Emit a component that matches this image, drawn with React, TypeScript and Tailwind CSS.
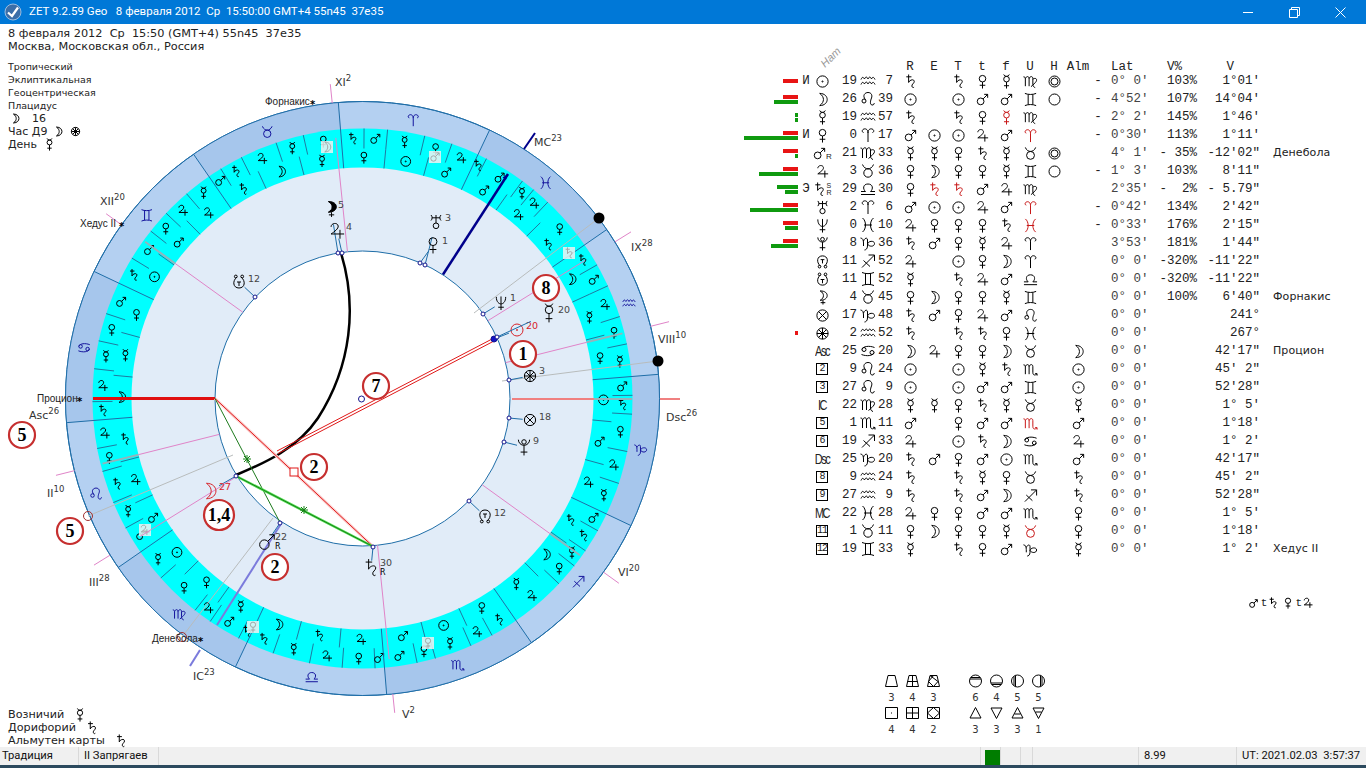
import type { ReactNode } from "react";

const circ = (x: number, y: number, r: number) =>
  `M${x - r} ${y}a${r} ${r} 0 1 0 ${r * 2} 0a${r} ${r} 0 1 0 ${-r * 2} 0`;

// glyphs are drawn in a -8..8 box
const GLYPHS: Record<string, string> = {
  Su: circ(0, 0, 6) + circ(0, 0, 0.6),
  Mo: "M-3 -6.5C2.5 -6.5 5 -3 5 0C5 3 2.5 6.5 -3 6.5C0 4.5 1 2 1 0C1 -2 0 -4.5 -3 -6.5Z",
  Me: "M-3 -7.5A3.2 3.2 0 0 0 3 -7.5" + circ(0, -2.5, 3) + "M0 0.5V7.5M-2.7 4.5H2.7",
  Ve: circ(0, -3, 3.5) + "M0 0.5V7.5M-3 4H3",
  Ma: circ(-2, 2, 3.6) + "M0.6 -0.6L5.5 -5.5M1.8 -5.5H5.5V-1.8",
  Ju: "M-5 -3.5C-5 -6.8 0.5 -7.5 1 -4.2C1.3 -2 -2 0.5 -5 2.5H6M2.5 -1V6.5",
  Sa: "M-4.5 -5H1M-2 -7.5V1C-1 -2 4 -3 4 0C4 2 1 3 1.5 5C1.8 6.5 3 6.8 3.8 6",
  Ur: "M-5 -7C-3.5 -5.5 -3.5 -3 -5 -1.5M5 -7C3.5 -5.5 3.5 -3 5 -1.5M-4 -4.2H4M0 -7V1" + circ(0, 3.8, 2.8),
  Ne: "M-5 -6.5C-5 -1 -2 1 0 1C2 1 5 -1 5 -6.5M0 -7V7.5M-3 4.5H3",
  Pl: circ(0, -4.5, 2) + "M-5 -6.5A5 5 0 0 0 5 -6.5M0 -1.5V7.5M-3 4.5H3",
  NN: "M-2 5C-7 1 -6 -6 0 -6C6 -6 7 1 2 5M-2 -2H2M0 -2V2" + circ(-3.2, 5.5, 1.4) + circ(3.2, 5.5, 1.4),
  SN: "M-2 -5C-7 -1 -6 6 0 6C6 6 7 -1 2 -5M-2 0H2M0 0V4" + circ(-3.2, -5.5, 1.4) + circ(3.2, -5.5, 1.4),
  Li: "M-2.5 -7C3 -7 5 -4.5 5 -2C5 0.5 2.5 3 -2.5 3C0 1.5 1 0 1 -2C1 -4 0 -5.5 -2.5 -7ZM0.5 3V7.5M-2 5.5H3",
  Fo: circ(0, 0, 6) + "M-4.2 -4.2L4.2 4.2M4.2 -4.2L-4.2 4.2",
  Sp: circ(0, 0, 6) + "M-4.2 -4.2L4.2 4.2M4.2 -4.2L-4.2 4.2M-6 0H6M0 -6V6",
  Ar: "M0 7V-2C0 -6 -3 -7 -5 -5.5C-6.5 -4.3 -5.5 -2.5 -4.5 -2.5M0 -2C0 -6 3 -7 5 -5.5C6.5 -4.3 5.5 -2.5 4.5 -2.5",
  Ta: circ(0, 2, 4.2) + "M-5.5 -6.5C-4.5 -3.5 -2 -2.2 0 -2.2C2 -2.2 4.5 -3.5 5.5 -6.5",
  Ge: "M-6 -6.5C-2.5 -5 2.5 -5 6 -6.5M-6 6.5C-2.5 5 2.5 5 6 6.5M-2.5 -5.5V5.5M2.5 -5.5V5.5",
  Cn: circ(-4, -1.5, 2) + circ(4, 1.5, 2) + "M-6 -1.5C-5 -5 1.5 -5.5 6.5 -3.5M6 1.5C5 5 -1.5 5.5 -6.5 3.5",
  Le: circ(-4, 2, 2) + "M-2.6 0.6C-6 -3.5 -3 -6.5 0 -6.5C3.5 -6.5 4.5 -3.5 3.5 -1C2.5 1.5 1.5 5.5 4 6C5.5 6.3 6.3 5 6.2 4",
  Vi: "M-7.5 -5C-6 -5 -5.5 -4 -5.5 -3V5M-5.5 -3C-4.5 -6 -1.5 -6 -1.5 -3V5M-1.5 -3C-0.5 -6 2.5 -6 2.5 -3V3C2.5 5 3.5 6 5 6.5M2.5 -2.5C5.5 -4.5 7.5 -2.5 6 0C5 1.5 3 3.5 0.5 5.5",
  Li2: "M-7 5.5H7M-7 2.5H-2.5C-5.5 0 -5 -5 0 -5C5 -5 5.5 0 2.5 2.5H7",
  Sc: "M-7.5 -5C-6 -5 -5.5 -4 -5.5 -3V5M-5.5 -3C-4.5 -6 -1.5 -6 -1.5 -3V5M-1.5 -3C-0.5 -6 2.5 -6 2.5 -3V3C2.5 6.5 5 6.5 7 4.5M5 4.2L7 4.5V6.5",
  Sg: "M-6 6.5L6.5 -6M0.5 -6H6.5V0M-4.5 -0.5L2 5.5",
  Cp: "M-7.5 -5C-5.5 -5 -4.5 -3 -4.5 0V3M-4.5 -2C-3.5 -5 -0.5 -6 -0.5 -3V3C-0.5 6 -2.5 7 -3.5 7M-0.5 1C0.5 -2.5 6.5 -2.5 6.5 0.5C6.5 4 1 4 -0.5 1",
  Aq: "M-7 -1.5C-6 -4 -5 -4.5 -3.5 -2C-2.5 -4.5 -1 -4.5 0 -2C1 -4.5 2.5 -4.5 3.5 -2C4.5 -4.5 6 -4 7 -1.5M-7 3.5C-6 1 -5 0.5 -3.5 3C-2.5 0.5 -1 0.5 0 3C1 0.5 2.5 0.5 3.5 3C4.5 0.5 6 1 7 3.5",
  Pi: "M-5.5 -7C-1.5 -4 -1.5 4 -5.5 7M5.5 -7C1.5 -4 1.5 4 5.5 7M-4 0H4",
};

const SIGNS = ["Ar", "Ta", "Ge", "Cn", "Le", "Vi", "Li2", "Sc", "Sg", "Cp", "Aq", "Pi"];

const TERMS: [string, number][][] = [
  [["Ju", 6], ["Ve", 12], ["Me", 20], ["Ma", 25], ["Sa", 30]],
  [["Ve", 8], ["Me", 14], ["Ju", 22], ["Sa", 27], ["Ma", 30]],
  [["Me", 6], ["Ju", 12], ["Ve", 17], ["Ma", 24], ["Sa", 30]],
  [["Ma", 7], ["Ve", 13], ["Me", 19], ["Ju", 26], ["Sa", 30]],
  [["Ju", 6], ["Ve", 11], ["Sa", 18], ["Me", 24], ["Ma", 30]],
  [["Me", 7], ["Ve", 17], ["Ju", 21], ["Ma", 28], ["Sa", 30]],
  [["Sa", 6], ["Me", 14], ["Ju", 21], ["Ve", 28], ["Ma", 30]],
  [["Ma", 7], ["Ve", 11], ["Me", 19], ["Ju", 24], ["Sa", 30]],
  [["Ju", 12], ["Ve", 17], ["Me", 21], ["Sa", 26], ["Ma", 30]],
  [["Me", 7], ["Ju", 14], ["Ve", 22], ["Sa", 26], ["Ma", 30]],
  [["Me", 7], ["Ve", 13], ["Ju", 20], ["Ma", 25], ["Sa", 30]],
  [["Ve", 12], ["Ju", 16], ["Me", 19], ["Ma", 28], ["Sa", 30]],
];

const FACES = [
  ["Ma", "Su", "Ve"], ["Me", "Mo", "Sa"], ["Ju", "Ma", "Su"], ["Ve", "Me", "Mo"],
  ["Sa", "Ju", "Ma"], ["Su", "Ve", "Me"], ["Mo", "Sa", "Ju"], ["Ma", "Su", "Ve"],
  ["Me", "Mo", "Sa"], ["Ju", "Ma", "Su"], ["Ve", "Me", "Mo"], ["Sa", "Ju", "Ma"],
];

const CX = 362.5;
const CY = 398.5;
const pt = (lon: number, r: number): [number, number] => {
  const t = ((180 + lon - 115.33) * Math.PI) / 180;
  return [CX + r * Math.cos(t), CY - r * Math.sin(t)];
};

const Sym = ({ n, x, y, size = 12, color = "#000", fill = "none" }: { n: string; x: number; y: number; size?: number; color?: string; fill?: string }) => (
  <path
    d={GLYPHS[n]}
    transform={`translate(${x} ${y}) scale(${size / 16})`}
    fill={fill}
    stroke={color}
    strokeWidth={1}
    vectorEffect="non-scaling-stroke"
  />
);

const Ico = ({ n, size = 15, color = "#000" }: { n: string; size?: number; color?: string }) => (
  <svg width={size} height={size} viewBox="-8 -8 16 16" className="inline-block align-middle overflow-visible">
    <path d={GLYPHS[n]} fill="none" stroke={color} strokeWidth={1} vectorEffect="non-scaling-stroke" />
  </svg>
);

const Line = ({ a, b, color, w = 1 }: { a: [number, number]; b: [number, number]; color: string; w?: number }) => (
  <line x1={a[0]} y1={a[1]} x2={b[0]} y2={b[1]} stroke={color} strokeWidth={w} />
);

const HOUSES: { lon: number; gray: boolean }[] = [
  { lon: 129.4, gray: true },
  { lon: 147.15, gray: false },
  { lon: 211.18, gray: false },
  { lon: 259.55, gray: true },
  { lon: 309.4, gray: true },
  { lon: 327.15, gray: false },
  { lon: 31.18, gray: false },
  { lon: 79.55, gray: true },
];

const LABELS: [string, string, number, number][] = [
  ["XI", "2", 335, 86], ["XII", "20", 100, 205], ["MC", "23", 534, 146], ["IX", "28", 631, 251],
  ["VIII", "10", 658, 343], ["Dsc", "26", 666, 421], ["VI", "20", 618, 576], ["V", "2", 402, 718],
  ["IC", "23", 193, 680], ["III", "28", 89, 586], ["II", "10", 47, 497], ["Asc", "26", 29, 419],
];

const STARS: [string, number, number, number][] = [
  ["Форнакис", 265, 105, 310], ["Хедус II", 80, 227, 119], ["Процион", 37, 402, 77], ["Денебола", 152, 642, 198],
];

const PLANETS: { n: string; x: number; y: number; deg: string; dx: number; dy: number; color?: string; from: [number, number]; size?: number; r?: boolean }[] = [
  { n: "Su", x: 517, y: 330, deg: "20", dx: 9, dy: -1, color: "#d8232a", from: [494, 339], size: 16 },
  { n: "Me", x: 549, y: 313, deg: "20", dx: 9, dy: 0, from: [497, 337], size: 20 },
  { n: "Ne", x: 501, y: 303, deg: "1", dx: 9, dy: -2, from: [483, 314], size: 15 },
  { n: "Ur", x: 436, y: 222, deg: "3", dx: 9, dy: -1, from: [425, 265], size: 16 },
  { n: "Ve", x: 433, y: 245, deg: "1", dx: 9, dy: -1, from: [420, 263], size: 18 },
  { n: "Li", x: 331, y: 209, deg: "5", dx: 7, dy: -1, from: [338, 253], size: 17 },
  { n: "Ju", x: 337, y: 231, deg: "4", dx: 9, dy: -1, from: [342, 253], size: 19 },
  { n: "SN", x: 239, y: 282, deg: "12", dx: 9, dy: 0, from: [255, 297], size: 16 },
  { n: "Mo", x: 210, y: 491, deg: "27", dx: 9, dy: -1, color: "#d8232a", from: [236, 476], size: 19 },
  { n: "Ma", x: 267, y: 542, deg: "22", dx: 8, dy: -2, from: [280, 523], size: 21, r: true },
  { n: "Sa", x: 371, y: 568, deg: "30", dx: 9, dy: -2, from: [373, 547], size: 19, r: true },
  { n: "NN", x: 485, y: 516, deg: "12", dx: 9, dy: 0, from: [469, 501], size: 16 },
  { n: "Pl", x: 524, y: 447, deg: "9", dx: 9, dy: -3, from: [504, 442], size: 18 },
  { n: "Fo", x: 530, y: 420, deg: "18", dx: 9, dy: 0, from: [509, 418], size: 15 },
  { n: "Sp", x: 530, y: 376, deg: "3", dx: 9, dy: -2, from: [509, 380], size: 15 },
];

const BADGES: [string, number, number, number][] = [
  ["1", 523, 354, 13], ["8", 546, 288, 13], ["7", 376, 386, 13], ["2", 314, 467, 13],
  ["2", 275, 567, 13], ["1,4", 219, 515, 15], ["5", 70, 531, 13], ["5", 22, 435, 13],
];

const HILITES: [string, number, number][] = [
  ["Mo", 327, 147], ["Ju", 145, 530], ["Ve", 253, 627], ["Ve", 428, 643], ["Ma", 435, 157], ["Sa", 569, 253],
];

const Chart = () => {
  const font = "DejaVu Sans, sans-serif";
  return (
    <svg viewBox="0 24 740 723" width={740} height={723} className="absolute left-0 top-0">
      <circle cx={CX} cy={CY} r={297} fill="#b4d0f1" stroke="#1f6ea8" />
      {SIGNS.map((s, i) => {
        const a = pt(i * 30, 297);
        const b = pt(i * 30 + 30, 297);
        return i % 2 === 1 ? (
          <path key={s} d={`M${CX} ${CY}L${a[0]} ${a[1]}A297 297 0 0 0 ${b[0]} ${b[1]}Z`} fill="#a6c6ec" />
        ) : null;
      })}
      <circle cx={CX} cy={CY} r={297} fill="none" stroke="#1f6ea8" />
      <circle cx={CX} cy={CY} r={270} fill="#00ffff" />
      <circle cx={CX} cy={CY} r={231} fill="#e1ecf8" />
      <circle cx={CX} cy={CY} r={147.5} fill="#fff" stroke="#1f6ea8" />

      {SIGNS.map((s, i) => {
        let start = 0;
        const base = i * 30;
        const [sx, sy] = pt(base + 15, 283);
        return (
          <g key={s}>
            <Line a={pt(base, 231)} b={pt(base, 297)} color="#1f6ea8" />
            <Sym n={s} x={sx} y={sy} size={14} color="#14149c" />
            {TERMS[i].map(([p, end]) => {
              const mid = base + (start + end) / 2;
              const [x, y] = pt(mid, 260);
              start = end;
              return (
                <g key={end}>
                  {end < 30 && <Line a={pt(base + end, 250)} b={pt(base + end, 270)} color="#1f7aa0" />}
                  <Sym n={p} x={x} y={y} size={13} />
                </g>
              );
            })}
            {FACES[i].map((p, k) => {
              const [x, y] = pt(base + 5 + k * 10, 241);
              return (
                <g key={k}>
                  {k > 0 && <Line a={pt(base + k * 10, 231)} b={pt(base + k * 10, 250)} color="#1f7aa0" />}
                  <Sym n={p} x={x} y={y} size={13} />
                </g>
              );
            })}
          </g>
        );
      })}

      {HILITES.map(([n, x, y], i) => (
        <g key={i}>
          <rect x={x - 6} y={y - 6} width={12} height={12} fill="#eef2f2" fillOpacity={0.85} />
          <Sym n={n} x={x} y={y} size={12} color="#a4a8a8" />
        </g>
      ))}

      {/* house cusps */}
      {HOUSES.map((h) => (
        <g key={h.lon}>
          <Line a={pt(h.lon, 147.5)} b={pt(h.lon, h.gray ? 231 : 262)} color="#e084c8" />
          {h.gray && <Line a={pt(h.lon, 231)} b={pt(h.lon, 268)} color="#93b4bc" w={2} />}
          <Line a={pt(h.lon, 297)} b={pt(h.lon, 316)} color="#e084c8" />
        </g>
      ))}
      <Line a={[93, 398.5]} b={[215, 398.5]} color="#e01010" w={3} />
      <Line a={[512, 399]} b={[594, 399]} color="#f08080" w={2} />
      <Line a={[594, 399]} b={[632, 399]} color="#93b4bc" w={2} />
      <Line a={[660, 399]} b={[680, 399]} color="#f08080" w={2} />
      <Line a={[443, 274.5]} b={[508, 174]} color="#00008b" w={2.5} />
      <path d="M508 174l-5.5 3.5l3.5 2.2z" fill="#00008b" />
      <Line a={[524, 149]} b={[535, 133]} color="#00008b" w={2} />
      <Line a={[281.5, 523]} b={[217, 625]} color="#7b7bdc" w={2} />
      <Line a={[200, 650]} b={[190, 666]} color="#7b7bdc" w={2} />

      {/* fixed star lines */}
      <Line a={[599, 218]} b={[474, 313]} color="#b8bcbc" />
      <Line a={[658, 361]} b={[502, 381]} color="#b8bcbc" />
      <Line a={[88, 516]} b={[233, 455]} color="#b8bcbc" />
      <Line a={[182, 637]} b={[273, 518]} color="#b8bcbc" />
      <circle cx={599} cy={218} r={5.5} fill="#000" />
      <circle cx={658} cy={361} r={5.5} fill="#000" />
      <circle cx={88} cy={516} r={4.5} fill="none" stroke="#a03030" />
      <circle cx={182} cy={637} r={4.5} fill="none" stroke="#a03030" />

      {/* aspects */}
      <path d="M341 253C357 305 352 365 318 418C298 448 265 463 236 475" fill="none" stroke="#000" strokeWidth={2.5} />
      <Line a={[215, 398.5]} b={[373, 546.5]} color="#fbd0d0" w={3} />
      <Line a={[215, 398.5]} b={[373, 546.5]} color="#e01818" />
      <Line a={[215, 398.5]} b={[280, 522.5]} color="#1c7a1c" />
      <Line a={[236, 476]} b={[373, 546.5]} color="#52e052" w={2.5} />
      <Line a={[236, 476]} b={[373, 546.5]} color="#168016" />
      <path d="M243 459h8M247 455v8M244 456l6 6M250 456l-6 6" stroke="#168016" />
      <path d="M300 510h8M304 506v8M301 507l6 6M307 507l-6 6" stroke="#168016" />
      <rect x={290} y={468} width={8} height={8} fill="#fff" stroke="#e01818" />
      <Line a={[494, 338]} b={[277, 451]} color="#e01818" />
      <Line a={[495, 340.5]} b={[278, 453.5]} color="#e01818" />
      <circle cx={361.5} cy={399} r={3} fill="#fff" stroke="#14148c" />

      {/* planets */}
      {PLANETS.map((p) => (
        <g key={p.n}>
          <Line a={p.from} b={[p.x + (p.from[0] - p.x) * 0.35, p.y + (p.from[1] - p.y) * 0.35]} color="#1f6ea8" />
          <circle cx={p.from[0]} cy={p.from[1]} r={p.n === "Su" ? 3 : 2} fill={p.n === "Su" ? "#1414c8" : "#fff"} stroke="#14148c" />
          <Sym n={p.n} x={p.x} y={p.y} size={p.size} color={p.color} fill={p.n === "Li" ? "#000" : "none"} />
          <text x={p.x + p.dx} y={p.y + p.dy} fontSize={9.5} fontFamily={font} fill={p.color ?? "#444"}>{p.deg}</text>
          {p.r && <text x={p.x + p.dx} y={p.y + p.dy + 9} fontSize={8} fontFamily={font} fill="#000">R</text>}
        </g>
      ))}

      {LABELS.map(([t, s, x, y]) => (
        <text key={t} x={x} y={y} fontSize={11} fontFamily={font} fill="#333">
          {t}
          <tspan dy={-5} fontSize={8.5}>{s}</tspan>
        </text>
      ))}
      {STARS.map(([t, x, y, sx]) => (
        <g key={t}>
          <text x={x} y={y} fontSize={10} fontFamily="Liberation Sans, sans-serif" fill="#222">{t}</text>
          <text x={sx} y={y + 3} fontSize={10} fontWeight={700} fontFamily={font} fill="#000">*</text>
        </g>
      ))}
      {BADGES.map(([t, x, y, r], i) => (
        <g key={i}>
          <circle cx={x} cy={y} r={r} fill="#fff" stroke="#c62f2f" strokeWidth={2.2} />
          <text x={x} y={y + 6} textAnchor="middle" fontSize={18} fontWeight={700} fontFamily="Liberation Serif, serif" fill="#000">{t}</text>
        </g>
      ))}
    </svg>
  );
};

type Row = {
  flag?: string;
  sym: ReactNode;
  deg: string;
  sign: string;
  min: string;
  r: string[];
  h?: string;
  alm?: string;
  minus?: boolean;
  lat: string;
  vp?: string;
  v: string;
  note?: string;
  top?: [string, number];
  bottom?: [string, number];
};

const RED = "#e81414";
const GREEN = "#0f9a0f";
const Box = ({ t }: { t: string }) => (
  <span className="inline-flex items-center justify-center w-[12px] h-[12px] border border-black text-[10px] leading-none tracking-[-1px]">{t}</span>
);
const Tag = ({ t }: { t: string }) => <span className="text-[11px] tracking-[-1.5px] leading-none scale-y-125 font-['Liberation_Sans']">{t}</span>;

const ROWS: Row[] = [
  { flag: "И", sym: <Ico n="Su" />, deg: "19", sign: "Aq", min: "7", r: ["Sa", "", "Sa", "Ve", "Me", "Vi"], h: "dbl", minus: true, lat: "0° 0'", vp: "103%", v: "1°01'", top: [RED, 15] },
  { sym: <Ico n="Mo" />, deg: "26", sign: "Le", min: "39", r: ["Su", "", "Su", "Ma", "Ma", "Ge"], h: "one", minus: true, lat: "4°52'", vp: "107%", v: "14°04'", top: [RED, 15], bottom: [GREEN, 24] },
  { sym: <Ico n="Me" />, deg: "19", sign: "Aq", min: "57", r: ["Sa", "", "Sa", "Ve", "!Me", "Vi"], minus: true, lat: "2° 2'", vp: "145%", v: "1°46'", top: [GREEN, 3], bottom: [GREEN, 3] },
  { flag: "И", sym: <Ico n="Ve" />, deg: "0", sign: "Ar", min: "17", r: ["Ma", "Su", "Su", "Ju", "Ma", "!Ar"], minus: true, lat: "0°30'", vp: "113%", v: "1°11'", top: [RED, 15], bottom: [GREEN, 54] },
  { sym: <span className="inline-flex items-end"><Ico n="Ma" /><span className="text-[8px] leading-none -ml-px font-['Liberation_Sans']">R</span></span>, deg: "21", sign: "Vi", min: "33", r: ["Me", "Me", "Ve", "Sa", "Me", "Ta"], h: "dbl", lat: "4° 1'", vp: "- 35%", v: "-12'02\"", note: "Денебола", top: [RED, 15], bottom: [GREEN, 3] },
  { sym: <Ico n="Ju" />, deg: "3", sign: "Ta", min: "36", r: ["Ve", "Mo", "Ve", "Ve", "Me", "Ge"], h: "one", minus: true, lat: "1° 3'", vp: "103%", v: "8'11\"", top: [RED, 15], bottom: [GREEN, 39] },
  { flag: "Э", sym: <span className="inline-flex items-center"><Ico n="Sa" /><span className="flex flex-col text-[7px] leading-[7px] -ml-px font-['Liberation_Sans']"><span>S</span><span>R</span></span></span>, deg: "29", sign: "Li2", min: "30", r: ["Ve", "!Sa", "!Sa", "Ma", "Ju", "Vi"], lat: "2°35'", vp: "-  2%", v: "- 5.79\"", top: [GREEN, 21], bottom: [GREEN, 13] },
  { sym: <Ico n="Ur" />, deg: "2", sign: "Ar", min: "6", r: ["Ma", "Su", "Su", "Ju", "Ma", "!Ar"], minus: true, lat: "0°42'", vp: "134%", v: "2'42\"", top: [RED, 15], bottom: [GREEN, 48] },
  { sym: <Ico n="Ne" />, deg: "0", sign: "Pi", min: "10", r: ["Ju", "Ve", "Ve", "Ve", "Sa", "!Pi"], minus: true, lat: "0°33'", vp: "176%", v: "2'15\"", top: [RED, 15], bottom: [GREEN, 13] },
  { sym: <Ico n="Pl" />, deg: "8", sign: "Cp", min: "36", r: ["Sa", "Ma", "Ve", "Me", "Ju", "Ar"], lat: "3°53'", vp: "181%", v: "1'44\"", top: [RED, 15], bottom: [GREEN, 27] },
  { sym: <Ico n="NN" />, deg: "11", sign: "Sg", min: "52", r: ["Ju", "", "Su", "Ve", "Mo", "Ar"], lat: "0° 0'", vp: "-320%", v: "-11'22\"" },
  { sym: <Ico n="SN" />, deg: "11", sign: "Ge", min: "52", r: ["Me", "", "Sa", "Ju", "Ma", "Li2"], lat: "0° 0'", vp: "-320%", v: "-11'22\"" },
  { sym: <Ico n="Li" />, deg: "4", sign: "Ta", min: "45", r: ["Ve", "Mo", "Ve", "Ve", "Me", "Ge"], lat: "0° 0'", vp: "100%", v: "6'40\"", note: "Форнакис" },
  { sym: <Ico n="Fo" />, deg: "17", sign: "Cp", min: "48", r: ["Sa", "Ma", "Ve", "Ju", "Ma", "Le"], lat: "0° 0'", v: "241°" },
  { sym: <Ico n="Sp" />, deg: "2", sign: "Aq", min: "52", r: ["Sa", "", "Sa", "Sa", "Ve", "Pi"], lat: "0° 0'", v: "267°", top: [RED, 3] },
  { sym: <Tag t="Asc" />, deg: "25", sign: "Cn", min: "20", r: ["Mo", "Ju", "Ve", "Ve", "Mo", "Ta"], alm: "Mo", lat: "0° 0'", v: "42'17\"", note: "Процион" },
  { sym: <Box t="2" />, deg: "9", sign: "Le", min: "24", r: ["Su", "", "Su", "Me", "Sa", "Sc"], alm: "Su", lat: "0° 0'", v: "45' 2\"" },
  { sym: <Box t="3" />, deg: "27", sign: "Le", min: "9", r: ["Su", "", "Su", "Ma", "Ma", "Ge"], alm: "Su", lat: "0° 0'", v: "52'28\"" },
  { sym: <Tag t="IC" />, deg: "22", sign: "Vi", min: "28", r: ["Me", "Me", "Ve", "Sa", "Me", "Ta"], alm: "Me", lat: "0° 0'", v: "1° 5'" },
  { sym: <Box t="5" />, deg: "1", sign: "Sc", min: "11", r: ["Ma", "", "Ve", "Ma", "Ma", "!Sc"], alm: "Ma", lat: "0° 0'", v: "1°18'" },
  { sym: <Box t="6" />, deg: "19", sign: "Sg", min: "33", r: ["Ju", "", "Su", "Sa", "Mo", "Cn"], alm: "Ju", lat: "0° 0'", v: "1° 2'" },
  { sym: <Tag t="Dsc" />, deg: "25", sign: "Cp", min: "20", r: ["Sa", "Ma", "Ve", "Ma", "Su", "Sc"], alm: "Ma", lat: "0° 0'", v: "42'17\"" },
  { sym: <Box t="8" />, deg: "9", sign: "Aq", min: "24", r: ["Sa", "", "Sa", "Me", "Ve", "Ta"], alm: "Sa", lat: "0° 0'", v: "45' 2\"" },
  { sym: <Box t="9" />, deg: "27", sign: "Aq", min: "9", r: ["Sa", "", "Sa", "Ma", "Mo", "Sg"], alm: "Sa", lat: "0° 0'", v: "52'28\"" },
  { sym: <Tag t="MC" />, deg: "22", sign: "Pi", min: "28", r: ["Ju", "Ve", "Ve", "Ma", "Ma", "Sc"], alm: "Ve", lat: "0° 0'", v: "1° 5'" },
  { sym: <Box t="11" />, deg: "1", sign: "Ta", min: "11", r: ["Ve", "Mo", "Ve", "Ve", "Me", "!Ta"], alm: "Ve", lat: "0° 0'", v: "1°18'" },
  { sym: <Box t="12" />, deg: "19", sign: "Ge", min: "33", r: ["Me", "", "Sa", "Ve", "Ma", "Cp"], alm: "Me", lat: "0° 0'", v: "1° 2'", note: "Хедус II" },
];

const GRID = "grid grid-cols-[58px_16px_16px_27px_21px_15px_5px_24px_24px_24px_24px_24px_24px_24px_24px_16px_47px_44px_63px_1fr] items-center";

const Cell = ({ v }: { v: string }) => {
  if (!v) return <span />;
  const red = v.startsWith("!");
  return (
    <span className="flex justify-center">
      <Ico n={red ? v.slice(1) : v} color={red ? "#c81818" : "#000"} />
    </span>
  );
};

const HouseMark = ({ kind }: { kind?: string }) => (
  <span className="flex justify-center">
    {kind && (
      <svg width={13} height={13} viewBox="0 0 13 13">
        <circle cx={6.5} cy={6.5} r={5.5} fill="none" stroke="#000" />
        {kind === "dbl" && <circle cx={6.5} cy={6.5} r={3.5} fill="none" stroke="#000" />}
      </svg>
    )}
  </span>
);

const Table = () => (
  <div className="relative w-[626px] pt-[34px] font-['Liberation_Mono',monospace] text-[12.5px] text-[#222]">
    <span className="absolute left-[79px] top-[25px] -rotate-45 text-[11px] italic text-[#999] font-['Liberation_Sans']">Нат</span>
    <div className={`${GRID} h-[14px]`}>
      <span className="col-start-8 col-span-1 text-center">R</span>
      <span className="text-center">E</span>
      <span className="text-center">T</span>
      <span className="text-center">t</span>
      <span className="text-center">f</span>
      <span className="text-center">U</span>
      <span className="text-center">H</span>
      <span className="text-center">Alm</span>
      <span />
      <span className="pl-[5px]">Lat</span>
      <span className="text-right pr-[15px]">V%</span>
      <span className="text-right pr-[26px]">V</span>
    </div>
    {ROWS.map((row, i) => (
      <div key={i} className={`${GRID} h-[18px] whitespace-pre`}>
        <span className="flex flex-col items-end gap-[1px]">
          {row.top && <span className="h-[4px] block" style={{ width: row.top[1], background: row.top[0] }} />}
          {row.bottom && <span className="h-[4px] block" style={{ width: row.bottom[1], background: row.bottom[0] }} />}
        </span>
        <span className="text-center">{row.flag}</span>
        <span className="flex justify-center items-center">{row.sym}</span>
        <span className="text-right">{row.deg}</span>
        <span className="flex justify-center"><Ico n={row.sign} size={16} /></span>
        <span className="text-right">{row.min}</span>
        <span />
        {row.r.map((v, k) => <Cell key={k} v={v} />)}
        <HouseMark kind={row.h} />
        <Cell v={row.alm ?? ""} />
        <span className="text-center">{row.minus ? "-" : ""}</span>
        <span className="pl-[5px] text-[#444]">{row.lat}</span>
        <span className="text-right">{row.vp}</span>
        <span className="text-right">{row.v}</span>
        <span className="pl-[13px] text-[11px] leading-[16px] tracking-[0.1px] font-['DejaVu_Sans',sans-serif]">{row.note}</span>
      </div>
    ))}
    <div className="flex items-center justify-end pr-[52px] mt-[38px] h-[14px] text-[11px]">
      <Ico n="Ma" size={11} />
      <span className="ml-[2px]">t</span>
      <Ico n="Sa" size={12} />
      <span className="w-[3px]" />
      <Ico n="Ve" size={12} />
      <span className="ml-[1px]">t</span>
      <Ico n="Ju" size={12} />
    </div>
    <Elements />
  </div>
);

const shape = (d: string, extra?: ReactNode) => (
  <svg width={15} height={14} viewBox="0 0 15 14">
    <path d={d} fill="none" stroke="#000" />
    {extra}
  </svg>
);

const QUADS: [ReactNode, string][][] = [
  [
    [shape("M1.5 12.5L4 1.5H11L13.5 12.5Z"), "3"],
    [shape("M1.5 12.5L4 1.5H11L13.5 12.5ZM7.5 1.5V12.5M2.5 7.5H12.5"), "4"],
    [shape("M1.5 12.5L4 1.5H11L13.5 12.5ZM4 1.5L12 7.5L7.5 12.5L2.5 7.5L7.5 1.5"), "3"],
  ],
  [
    [shape("M1.5 1.5H13.5V12.5H1.5Z", <rect x={7} y={6.5} width={1} height={1} />), "4"],
    [shape("M1.5 1.5H13.5V12.5H1.5ZM7.5 1.5V12.5M1.5 7H13.5"), "4"],
    [shape("M1.5 1.5H13.5V12.5H1.5ZM7.5 1.5L13.5 7L7.5 12.5L1.5 7Z"), "2"],
  ],
];

const CROSS: [ReactNode, string][][] = [
  [
    [shape(circ(7.5, 7, 6) + "M2 5H13" + "M3 3.5H12"), "6"],
    [shape(circ(7.5, 7, 6) + "M2 9H13" + "M3 10.5H12"), "4"],
    [shape(circ(7.5, 7, 6) + "M5.5 1.5V12.5M4 2.5V11.5"), "5"],
    [shape(circ(7.5, 7, 6) + "M9.5 1.5V12.5M11 2.5V11.5"), "5"],
  ],
  [
    [shape("M7.5 1.5L13 12H2Z"), "3"],
    [shape("M2 2H13L7.5 12.5Z"), "3"],
    [shape("M7.5 1.5L13 12H2ZM4.5 8H10.5"), "3"],
    [shape("M2 2H13L7.5 12.5ZM4.5 6H10.5"), "1"],
  ],
];

const ElementGrid = ({ rows, cols }: { rows: [ReactNode, string][][]; cols: string }) => (
  <div className={`grid ${cols} gap-x-[6px] gap-y-[2px] justify-items-center font-['DejaVu_Sans',sans-serif] text-[10px] leading-[12px] text-[#333]`}>
    {rows.flat().map(([icon, n], i) => (
      <div key={i} className="flex flex-col items-center gap-[4px]">
        {icon}
        <span>{n}</span>
      </div>
    ))}
  </div>
);

const Elements = () => (
  <div className="flex gap-[27px] ml-[144px] mt-[64px]">
    <ElementGrid rows={QUADS} cols="grid-cols-3" />
    <ElementGrid rows={CROSS} cols="grid-cols-4" />
  </div>
);

const StatusCell = ({ w, children }: { w: string; children?: ReactNode }) => (
  <div className={`${w} h-full border-r border-[#d9d9d9] pl-[5px] flex items-center overflow-hidden whitespace-nowrap`}>{children}</div>
);

export default function App() {
  return (
    <div className="w-[1366px] h-[768px] flex flex-col overflow-hidden bg-white font-['DejaVu_Sans',sans-serif]">
      {/* Title bar */}
      <div className="h-[24px] bg-[#0078d7] flex items-center text-white">
        <svg width={18} height={18} viewBox="0 0 18 18" className="ml-[4px]">
          <circle cx={9} cy={9} r={8} fill="#3b6ea8" />
          <circle cx={9} cy={9} r={8} fill="none" stroke="#b9cfe8" strokeWidth={0.8} />
          <path d="M4 9.5L8 13L14 4.5" fill="none" stroke="#fff" strokeWidth={2.2} />
        </svg>
        <span className="ml-[7px] text-[11.5px] whitespace-pre font-['Roboto',sans-serif]">ZET 9.2.59 Geo   8 февраля 2012  Ср  15:50:00 GMT+4 55n45  37e35</span>
        <div className="ml-auto flex items-center h-full">
          <div className="w-[46px] h-full flex items-center justify-center">
            <svg width={10} height={10} viewBox="0 0 10 10"><path d="M0 5.5H10" stroke="#fff" /></svg>
          </div>
          <div className="w-[46px] h-full flex items-center justify-center">
            <svg width={11} height={11} viewBox="0 0 11 11"><path d="M.5 2.5H8.5V10.5H.5ZM2.5 2.5V.5H10.5V8.5H8.5" fill="none" stroke="#fff" /></svg>
          </div>
          <div className="w-[46px] h-full flex items-center justify-center mr-[3px]">
            <svg width={11} height={11} viewBox="0 0 11 11"><path d="M.5 .5L10.5 10.5M10.5 .5L.5 10.5" stroke="#fff" /></svg>
          </div>
        </div>
      </div>

      {/* Work area */}
      <div className="relative flex-1 flex">
        <Chart />
        <div className="relative w-[740px] flex flex-col justify-between pl-[8px] pt-[3px] text-[#222]">
          <div>
            <div className="text-[11.3px] leading-[13px] whitespace-pre">8 февраля 2012  Ср  15:50 (GMT+4) 55n45  37e35</div>
            <div className="text-[11.3px] leading-[13px]">Москва, Московская обл., Россия</div>
            <div className="mt-[7px] text-[9.5px] leading-[13px]">
              <div>Тропический</div>
              <div>Эклиптикальная</div>
              <div>Геоцентрическая</div>
              <div>Плацидус</div>
            </div>
            <div className="text-[11px] leading-[13px]">
              <div className="h-[13px] flex items-center gap-[11px] pl-[2px]"><Ico n="Mo" size={11} /><span>16</span></div>
              <div className="h-[13px] flex items-center gap-[6px]"><span>Час Д9</span><Ico n="Mo" size={11} /><Ico n="Sp" size={11} /></div>
              <div className="h-[13px] flex items-center gap-[6px]"><span>День</span><Ico n="Me" size={13} /></div>
            </div>
          </div>
          <div className="text-[11.2px] leading-[13px]">
            <div className="h-[13px] flex items-center gap-[9px]"><span>Возничий</span><Ico n="Me" size={14} /></div>
            <div className="h-[13px] flex items-center gap-[9px]"><span>Дорифорий</span><Ico n="Sa" size={14} /></div>
            <div className="h-[13px] flex items-center gap-[9px]"><span>Альмутен карты</span><Ico n="Sa" size={14} /></div>
          </div>
        </div>
        <Table />
      </div>

      {/* Status bar */}
      <div className="h-[18px] bg-[#f0f0f0] flex items-center text-[11.2px] text-[#111] font-['Roboto',sans-serif]">
        <div className="w-[79px] h-full border-r border-[#d9d9d9] pl-[2px] flex items-center">Традиция</div>
        <StatusCell w="w-[80px]">II Запрягаев</StatusCell>
        <StatusCell w="w-[822px]" />
        <div className="w-[20px] h-full border-r border-[#d9d9d9] pl-[4px] flex items-end">
          <span className="block w-[15px] h-[15px] bg-[#007d00]" />
        </div>
        <div className="w-[20px] h-full border-r border-[#d9d9d9]" />
        <div className="w-[12px] h-full border-r border-[#d9d9d9]" />
        <StatusCell w="w-[106px]" />
        <StatusCell w="w-[98px]">8.99</StatusCell>
        <div className="flex-1 pl-[5px] whitespace-pre">UT: 2021.02.03  3:57:37</div>
      </div>
      <div className="h-[3px] bg-[#2c4a5e]" />
    </div>
  );
}
